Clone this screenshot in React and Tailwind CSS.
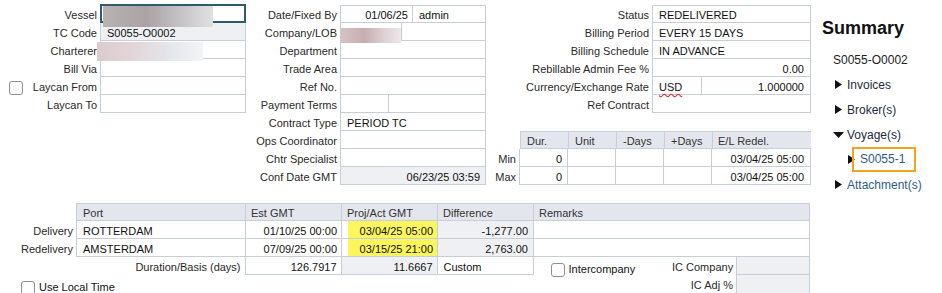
import React from "react";

const Tri = () => (
  <svg width="7" height="9" viewBox="0 0 7 9" className="shrink-0">
    <polygon points="0,0 7,4.5 0,9" fill="#111" />
  </svg>
);
const TriDown = () => (
  <svg width="11" height="6" viewBox="0 0 11 6" className="shrink-0">
    <polygon points="0,0 11,0 5.5,6" fill="#111" />
  </svg>
);

function Lbl({ children, className = "" }) {
  return (
    <div className={"leading-[20px] text-right pr-[3px] text-[#2a2a2a] whitespace-nowrap " + className}>{children}</div>
  );
}

export default function App() {
  return (
    <div className="relative w-[942px] h-[293px] overflow-hidden bg-white text-[11px] text-[#111] font-['Liberation_Sans',Arial,sans-serif]">
      {/* Top section */}
      <div className="flex items-start h-[185px] pt-[5px]">
        {/* Column A */}
        <div className="w-[246px] shrink-0">
          <div className="flex h-[18px]">
            <Lbl className="w-[100px]">Vessel</Lbl>
            <div className="w-[146px] h-[19px] -mt-px border-2 border-[#2f5b6f] bg-white"></div>
          </div>
          <div className="flex h-[18px]">
            <Lbl className="w-[100px]">TC Code</Lbl>
            <div className="w-[146px] h-[18px] border-x border-b border-[#c8ced8] bg-[#eef0f3] pl-[6px] leading-[20px]">S0055-O0002</div>
          </div>
          <div className="flex h-[18px]">
            <Lbl className="w-[100px]">Charterer</Lbl>
            <div className="w-[146px] h-[18px] border-x border-b border-[#c8ced8]"></div>
          </div>
          <div className="flex h-[18px]">
            <Lbl className="w-[100px]">Bill Via</Lbl>
            <div className="w-[146px] h-[18px] border-x border-b border-[#c8ced8]"></div>
          </div>
          <div className="flex h-[18px]">
            <div className="w-[100px] flex items-start">
              <div className="ml-[9px] mt-[4px] w-[14px] h-[14px] border border-[#8a8f98] rounded-[3px] bg-white shrink-0"></div>
              <div className="ml-auto pr-[3px] leading-[20px] text-[#2a2a2a]">Laycan From</div>
            </div>
            <div className="w-[146px] h-[18px] border-x border-b border-[#c8ced8]"></div>
          </div>
          <div className="flex h-[18px]">
            <Lbl className="w-[100px]">Laycan To</Lbl>
            <div className="w-[146px] h-[18px] border-x border-b border-[#c8ced8]"></div>
          </div>
        </div>

        {/* Column B */}
        <div className="w-[240px] shrink-0">
          <div className="flex h-[18px]">
            <Lbl className="w-[94px]">Date/Fixed By</Lbl>
            <div className="w-[146px] h-[18px] border border-[#c8ced8] flex">
              <div className="w-[72px] border-r border-[#c8ced8] text-right pr-[4px] leading-[18px]">01/06/25</div>
              <div className="pl-[6px] leading-[18px]">admin</div>
            </div>
          </div>
          <div className="flex h-[18px]">
            <Lbl className="w-[94px]">Company/LOB</Lbl>
            <div className="w-[146px] h-[18px] border-x border-b border-[#c8ced8] flex">
              <div className="w-[61px] border-r border-[#c8ced8]"></div>
            </div>
          </div>
          {["Department", "Trade Area", "Ref No."].map((l) => (
            <div key={l} className="flex h-[18px]">
              <Lbl className="w-[94px]">{l}</Lbl>
              <div className="w-[146px] h-[18px] border-x border-b border-[#c8ced8]"></div>
            </div>
          ))}
          <div className="flex h-[18px]">
            <Lbl className="w-[94px]">Payment Terms</Lbl>
            <div className="w-[146px] h-[18px] border-x border-b border-[#c8ced8] flex">
              <div className="w-[48px] border-r border-[#c8ced8]"></div>
            </div>
          </div>
          <div className="flex h-[18px]">
            <Lbl className="w-[94px]">Contract Type</Lbl>
            <div className="w-[146px] h-[18px] border-x border-b border-[#c8ced8] pl-[6px] leading-[20px]">PERIOD TC</div>
          </div>
          {["Ops Coordinator", "Chtr Specialist"].map((l) => (
            <div key={l} className="flex h-[18px]">
              <Lbl className="w-[94px]">{l}</Lbl>
              <div className="w-[146px] h-[18px] border-x border-b border-[#c8ced8]"></div>
            </div>
          ))}
          <div className="flex h-[18px]">
            <Lbl className="w-[94px]">Conf Date GMT</Lbl>
            <div className="w-[146px] h-[18px] border-x border-b border-[#c8ced8] bg-[#eef0f3] text-right pr-[5px] leading-[20px]">06/23/25 03:59</div>
          </div>
        </div>

        {/* Column C */}
        <div className="w-[325px] shrink-0">
          <div className="flex h-[18px]">
            <Lbl className="w-[166px]">Status</Lbl>
            <div className="w-[159px] h-[18px] border border-[#c8ced8] pl-[6px] leading-[18px]">REDELIVERED</div>
          </div>
          <div className="flex h-[18px]">
            <Lbl className="w-[166px]">Billing Period</Lbl>
            <div className="w-[159px] h-[18px] border-x border-b border-[#c8ced8] pl-[6px] leading-[20px]">EVERY 15 DAYS</div>
          </div>
          <div className="flex h-[18px]">
            <Lbl className="w-[166px]">Billing Schedule</Lbl>
            <div className="w-[159px] h-[18px] border-x border-b border-[#c8ced8] pl-[6px] leading-[20px]">IN ADVANCE</div>
          </div>
          <div className="flex h-[18px]">
            <Lbl className="w-[166px]">Rebillable Admin Fee %</Lbl>
            <div className="w-[159px] h-[18px] border-x border-b border-[#c8ced8] text-right pr-[6px] leading-[20px]">0.00</div>
          </div>
          <div className="flex h-[18px]">
            <Lbl className="w-[166px]">Currency/Exchange Rate</Lbl>
            <div className="w-[159px] h-[18px] border-x border-b border-[#c8ced8] flex leading-[20px]">
              <div className="w-[49px] border-r border-[#c8ced8] pl-[6px]">
                <span className="underline decoration-wavy decoration-[#e02020] underline-offset-[2px]">USD</span>
              </div>
              <div className="flex-1 text-right pr-[6px]">1.000000</div>
            </div>
          </div>
          <div className="flex h-[18px]">
            <Lbl className="w-[166px]">Ref Contract</Lbl>
            <div className="w-[159px] h-[18px] border-x border-b border-[#c8ced8]"></div>
          </div>
          <div className="h-[18px]"></div>
          {/* Dur table */}
          <div className="flex h-[18px] ml-[4px]">
            <div className="w-[30px]"></div>
            <div className="flex h-[18px] bg-[#e4e6ee] border-y border-l border-[#c8ced8] leading-[18px] text-[#333]">
              <div className="w-[48px] border-r border-[#c8ced8] pl-[6px]">Dur.</div>
              <div className="w-[48px] border-r border-[#c8ced8] pl-[6px]">Unit</div>
              <div className="w-[48px] border-r border-[#c8ced8] pl-[6px]">-Days</div>
              <div className="w-[48px] border-r border-[#c8ced8] pl-[6px]">+Days</div>
              <div className="w-[98px] pl-[5px]">E/L Redel.</div>
            </div>
          </div>
          {["Min", "Max"].map((l) => (
            <div key={l} className="flex h-[18px] ml-[4px]">
              <Lbl className="w-[30px]">{l}</Lbl>
              <div className="flex h-[18px] border-b border-l border-[#c8ced8] leading-[20px]">
                <div className="w-[48px] border-r border-[#c8ced8] text-right pr-[5px]">0</div>
                <div className="w-[48px] border-r border-[#c8ced8]"></div>
                <div className="w-[48px] border-r border-[#c8ced8]"></div>
                <div className="w-[48px] border-r border-[#c8ced8]"></div>
                <div className="w-[99px] border-r border-[#c8ced8] text-right pr-[6px]">03/04/25 05:00</div>
              </div>
            </div>
          ))}
        </div>

        {/* Summary */}
        <div className="ml-[11px] shrink-0 text-[12px]">
          <div className="mt-[13px] text-[18px] leading-[20px] font-bold text-[#111]">Summary</div>
          <div className="mt-[9px]">
            <div className="h-[25px] flex items-center pl-[11px] text-[#222]">S0055-O0002</div>
            <div className="h-[25px] flex items-center pl-[13px] gap-[5px] text-[#1c2b3e]"><Tri /><span>Invoices</span></div>
            <div className="h-[25px] flex items-center pl-[13px] gap-[5px] text-[#1c2b3e]"><Tri /><span>Broker(s)</span></div>
            <div className="h-[25px] flex items-center pl-[11px] gap-[3px] text-[#1c2b3e]"><TriDown /><span>Voyage(s)</span></div>
            <div className="h-[25px] flex items-center pl-[26px]">
              <Tri />
              <div className="relative -ml-[3px] h-[25px] w-[64px] border-2 border-[#f2a51c] pl-[6px] leading-[21px] text-[#2d5c8a]">S0055-1</div>
            </div>
            <div className="h-[25px] flex items-center pl-[13px] gap-[5px] text-[#2d5c8a]"><Tri /><span>Attachment(s)</span></div>
          </div>
        </div>
      </div>

      {/* Bottom section */}
      <div className="mt-[18px] w-[810px]">
        <div className="flex h-[18px]">
          <div className="w-[76px]"></div>
          <div className="flex h-[18px] bg-[#e4e6ee] border-y border-l border-[#c8ced8] leading-[18px] text-[#333]">
            <div className="w-[169px] border-r border-[#c8ced8] pl-[6px]">Port</div>
            <div className="w-[96px] border-r border-[#c8ced8] pl-[5px]">Est GMT</div>
            <div className="w-[96px] border-r border-[#c8ced8] pl-[5px]">Proj/Act GMT</div>
            <div className="w-[96px] border-r border-[#c8ced8] pl-[5px]">Difference</div>
            <div className="w-[276px] border-r border-[#c8ced8] pl-[5px]">Remarks</div>
          </div>
        </div>
        {[
          ["Delivery", "ROTTERDAM", "01/10/25 00:00", "03/04/25 05:00", "-1,277.00"],
          ["Redelivery", "AMSTERDAM", "07/09/25 00:00", "03/15/25 21:00", "2,763.00"],
        ].map((r) => (
          <div key={r[0]} className="flex h-[18px]">
            <Lbl className="w-[76px]">{r[0]}</Lbl>
            <div className="flex h-[18px] border-b border-l border-[#c8ced8] leading-[20px]">
              <div className="w-[169px] border-r border-[#c8ced8] pl-[6px]">{r[1]}</div>
              <div className="w-[96px] border-r border-[#c8ced8] text-right pr-[4px]">{r[2]}</div>
              <div className="w-[96px] border-r border-[#c8ced8] pl-[6px]">
                <div className="h-[17px] bg-[#fcf65e] text-right pr-[4px]">{r[3]}</div>
              </div>
              <div className="w-[96px] border-r border-[#c8ced8] bg-[#eef0f3] text-right pr-[5px]">{r[4]}</div>
              <div className="w-[276px] border-r border-[#c8ced8]"></div>
            </div>
          </div>
        ))}
        <div className="flex h-[18px]">
          <Lbl className="w-[245px] pr-[4px]">Duration/Basis (days)</Lbl>
          <div className="flex h-[18px] border-b border-l border-[#c8ced8] leading-[20px]">
            <div className="w-[96px] border-r border-[#c8ced8] text-right pr-[4px]">126.7917</div>
            <div className="w-[96px] border-r border-[#c8ced8] bg-[#eef0f3] text-right pr-[4px]">11.6667</div>
            <div className="w-[96px] border-r border-[#c8ced8] pl-[6px]">Custom</div>
          </div>
          <div className="w-[203px] flex items-start">
            <div className="ml-[17px] mt-[6px] w-[14px] h-[14px] border border-[#8a8f98] rounded-[3px] bg-white shrink-0"></div>
            <div className="ml-[4px] leading-[24px]">Intercompany</div>
            <div className="ml-auto pr-[3px] leading-[20px] text-[#2a2a2a]">IC Company</div>
          </div>
          <div className="w-[74px] h-[18px] border-x border-b border-[#c8ced8] bg-[#eef0f3]"></div>
        </div>
        <div className="flex h-[18px]">
          <div className="ml-[21px] mt-[6px] w-[14px] h-[14px] border border-[#8a8f98] rounded-[3px] bg-white shrink-0"></div>
          <div className="ml-[4px] leading-[24px]">Use Local Time</div>
          <Lbl className="ml-auto">IC Adj %</Lbl>
          <div className="w-[74px] h-[18px] border-x border-[#c8ced8] bg-[#eef0f3]"></div>
        </div>
      </div>

      {/* Redaction blurs over fields */}
      <div className="absolute left-[103px] top-[6px] w-[110px] h-[21px] bg-[linear-gradient(90deg,#b9b2b2_0%,#aaa3a5_40%,#c4c1c4_70%,#e0e0e2_100%)]"></div>
      <div className="absolute left-[97px] top-[42px] w-[106px] h-[19px] bg-[linear-gradient(90deg,#dccbce_0%,#e2d6d9_35%,#e4e7eb_70%,#f2f3f5_100%)]"></div>
      <div className="absolute left-[340px] top-[28px] w-[61px] h-[15px] bg-[linear-gradient(90deg,#d6c3c4_0%,#c8adb0_40%,#dccfd1_70%,#eee8ea_100%)]"></div>
    </div>
  );
}
